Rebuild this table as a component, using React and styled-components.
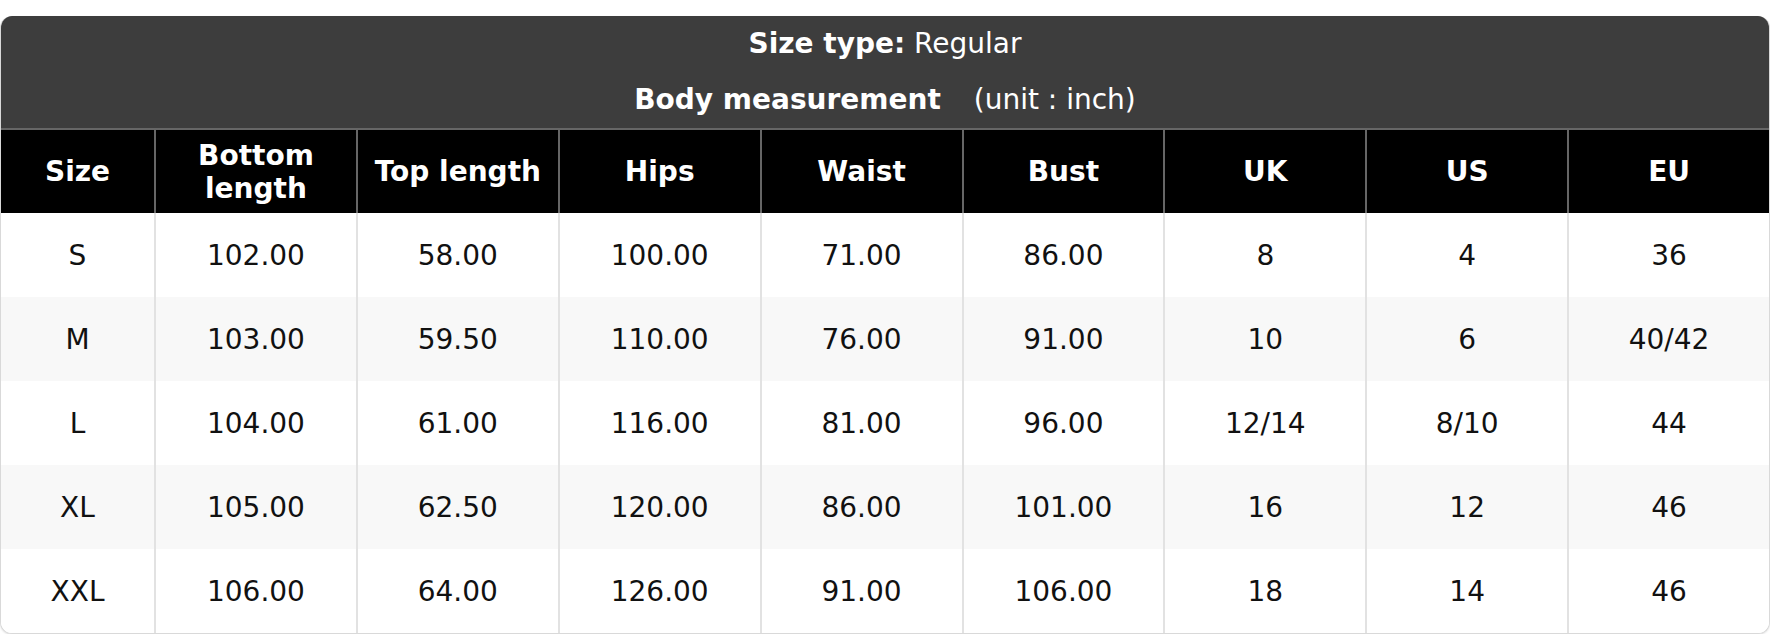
import React from "react";
import styled, { createGlobalStyle } from "styled-components";

const Global = createGlobalStyle`
  html, body { margin: 0; padding: 0; background: #fff; }
  body { padding-top: 16px; font-family: "DejaVu Sans", Verdana, sans-serif; }
  * { box-sizing: border-box; }
`;

const Card = styled.div`
  width: 100%;
  border: 1px solid #d9d9d9;
  border-top: 0;
  border-radius: 12px;
  overflow: hidden;
  background: #fff;
  box-shadow: 0 1px 2px rgba(0, 0, 0, 0.12);
`;

const TitleBlock = styled.div`
  background: #3d3d3d;
  color: #fff;
  display: flex;
  flex-direction: column;
`;

const TitleLine = styled.div`
  height: ${(p) => p.$h}px;
  display: flex;
  align-items: center;
  justify-content: center;
  font-size: 28px;
  white-space: pre;
`;

const Strong = styled.span`
  font-weight: 700;
`;

const Unit = styled.span`
  margin-left: 33px;
`;

const Row = styled.div`
  display: grid;
  grid-template-columns: 153px repeat(8, 1fr);
  height: ${(p) => (p.$head ? 85 : 84)}px;
  background: ${(p) => (p.$head ? "#000" : p.$alt ? "#f8f8f8" : "#fff")};
  border-top: ${(p) => (p.$head ? "2px solid #666" : "0")};
`;

const Cell = styled.div`
  display: flex;
  align-items: center;
  justify-content: center;
  text-align: center;
  font-size: 28px;
  line-height: 33px;
  color: ${(p) => (p.$head ? "#fff" : "#111")};
  font-weight: ${(p) => (p.$head ? 700 : 400)};
  border-left: ${(p) =>
    p.$first ? "0" : p.$head ? "2px solid #666" : "2px solid #e2e2e2"};
`;

const HeadText = styled.span`
  white-space: pre-line;
`;

const headers = ["Size", "Bottom\nlength", "Top length", "Hips", "Waist", "Bust", "UK", "US", "EU"];

const rows = [
  ["S", "102.00", "58.00", "100.00", "71.00", "86.00", "8", "4", "36"],
  ["M", "103.00", "59.50", "110.00", "76.00", "91.00", "10", "6", "40/42"],
  ["L", "104.00", "61.00", "116.00", "81.00", "96.00", "12/14", "8/10", "44"],
  ["XL", "105.00", "62.50", "120.00", "86.00", "101.00", "16", "12", "46"],
  ["XXL", "106.00", "64.00", "126.00", "91.00", "106.00", "18", "14", "46"],
];

export default function App() {
  return (
    <>
      <Global />
      <Card>
        <TitleBlock>
          <TitleLine $h={54}>
            <Strong>Size type:</Strong> Regular
          </TitleLine>
          <TitleLine $h={58}>
            <Strong>Body measurement</Strong>
            <Unit>(unit : inch)</Unit>
          </TitleLine>
        </TitleBlock>
        <Row $head>
          {headers.map((h, i) => (
            <Cell key={h} $head $first={i === 0}>
              <HeadText>{h}</HeadText>
            </Cell>
          ))}
        </Row>
        {rows.map((r, ri) => (
          <Row key={r[0]} $alt={ri % 2 === 1}>
            {r.map((v, i) => (
              <Cell key={i} $first={i === 0}>
                {v}
              </Cell>
            ))}
          </Row>
        ))}
      </Card>
    </>
  );
}
